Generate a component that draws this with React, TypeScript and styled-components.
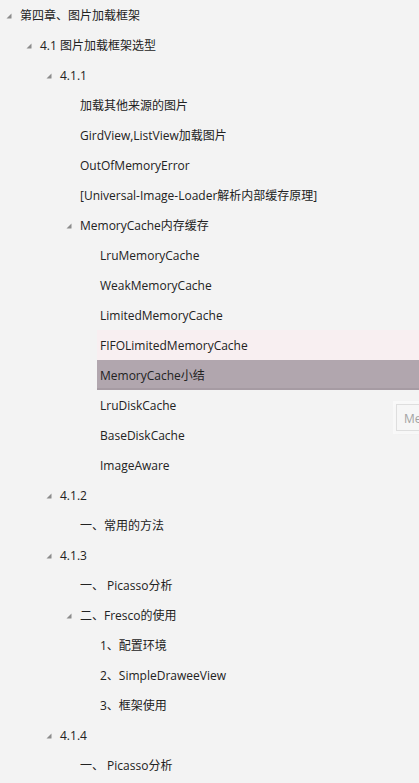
import React from "react";
import styled, { createGlobalStyle } from "styled-components";

const GlobalStyle = createGlobalStyle`
  html, body {
    margin: 0;
    padding: 0;
    background: #f3f3f3;
  }
  body {
    font-family: "Open Sans", "Noto Sans CJK SC", sans-serif;
    color: #262626;
  }
`;

// Outer pane of the outline view
const Pane = styled.div`
  position: relative;
  width: 419px;
  height: 783px;
  overflow: hidden;
  background: #f3f3f3;
`;

const TreeList = styled.ul`
  list-style: none;
  margin: 0;
  padding: 0;
`;

// One line of the outline
const Row = styled.li<{ $level: number; $hover?: boolean; $selected?: boolean }>`
  display: flex;
  align-items: center;
  height: 30px;
  padding-left: ${(p) => p.$level * 20 + 6}px;
  box-sizing: border-box;
`;

// Slot holding the expand triangle
const Toggle = styled.span`
  display: flex;
  align-items: center;
  width: 14px;
  height: 100%;
  flex-shrink: 0;
`;

const Label = styled.span<{ $hover?: boolean; $selected?: boolean }>`
  flex: 1;
  display: flex;
  align-items: center;
  height: 100%;
  margin-left: -3px;
  padding-left: 3px;
  font-size: 12px;
  white-space: nowrap;
  background: ${(p) => (p.$selected ? "#b1a6ae" : p.$hover ? "#f8eff1" : "transparent")};
  box-shadow: ${(p) => (p.$selected ? "inset 0 -2px 0 #a69ba3" : "none")};
  color: #222;
`;

// Hover tooltip, cut off by the pane edge
const Tip = styled.div`
  position: absolute;
  left: 396px;
  top: 404px;
  height: 25px;
  display: flex;
  align-items: center;
  padding: 0 8px 0 7px;
  background: #f6f6f6;
  border: 1px solid #dedede;
  box-shadow: 0 0 0 3px rgba(250, 250, 250, 0.8), 0 1px 4px rgba(0, 0, 0, 0.08);
  font-size: 12px;
  color: #a3a3a3;
  white-space: nowrap;
`;

const Arrow = () => (
  <svg width="6" height="6" viewBox="0 0 6 6" style={{ marginTop: 1 }}>
    <polygon points="5.5,0.5 5.5,5.5 0.5,5.5" fill="#8c8c8c" />
  </svg>
);

type Node = {
  label: string;
  level: number;
  open?: boolean;
  hover?: boolean;
  selected?: boolean;
};

const nodes: Node[] = [
  { label: "第四章、图片加载框架", level: 0, open: true },
  { label: "4.1 图片加载框架选型", level: 1, open: true },
  { label: "4.1.1", level: 2, open: true },
  { label: "加载其他来源的图片", level: 3 },
  { label: "GirdView,ListView加载图片", level: 3 },
  { label: "OutOfMemoryError", level: 3 },
  { label: "[Universal-Image-Loader解析内部缓存原理]", level: 3 },
  { label: "MemoryCache内存缓存", level: 3, open: true },
  { label: "LruMemoryCache", level: 4 },
  { label: "WeakMemoryCache", level: 4 },
  { label: "LimitedMemoryCache", level: 4 },
  { label: "FIFOLimitedMemoryCache", level: 4, hover: true },
  { label: "MemoryCache小结", level: 4, selected: true },
  { label: "LruDiskCache", level: 4 },
  { label: "BaseDiskCache", level: 4 },
  { label: "ImageAware", level: 4 },
  { label: "4.1.2", level: 2, open: true },
  { label: "一、常用的方法", level: 3 },
  { label: "4.1.3", level: 2, open: true },
  { label: "一、 Picasso分析", level: 3 },
  { label: "二、Fresco的使用", level: 3, open: true },
  { label: "1、配置环境", level: 4 },
  { label: "2、SimpleDraweeView", level: 4 },
  { label: "3、框架使用", level: 4 },
  { label: "4.1.4", level: 2, open: true },
  { label: "一、 Picasso分析", level: 3 },
];

const App = () => (
  <Pane>
    <GlobalStyle />
    <TreeList>
      {nodes.map((n, i) => (
        <Row key={i} $level={n.level}>
          <Toggle>{n.open && <Arrow />}</Toggle>
          <Label $hover={n.hover} $selected={n.selected}>
            {n.label}
          </Label>
        </Row>
      ))}
    </TreeList>
    <Tip>MemoryCache小结</Tip>
  </Pane>
);

export default App;
